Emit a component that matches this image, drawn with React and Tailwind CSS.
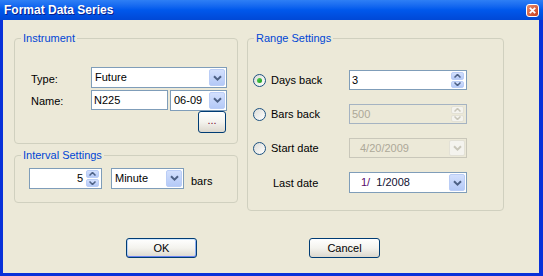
import React from "react";

const Chevron = ({ color = "#4D6185" }) => (
  <svg width="9" height="6" viewBox="0 0 9 6">
    <path d="M1 1.2 L4.5 4.6 L8 1.2" fill="none" stroke={color} strokeWidth="2" />
  </svg>
);

const ArrowUp = ({ color = "#4D6185" }) => (
  <svg width="7" height="4" viewBox="0 0 7 4">
    <path d="M0.5 3.5 L3.5 0.5 L6.5 3.5" fill="none" stroke={color} strokeWidth="1.5" />
  </svg>
);
const ArrowDown = ({ color = "#4D6185" }) => (
  <svg width="7" height="4" viewBox="0 0 7 4">
    <path d="M0.5 0.5 L3.5 3.5 L6.5 0.5" fill="none" stroke={color} strokeWidth="1.5" />
  </svg>
);

function Combo({ w, h = "h-[21px]", children, disabled }) {
  return (
    <div
      className={`${w} ${h} flex border ${
        disabled ? "border-[#C9C7BA] bg-[#ECE9D8]" : "border-[#7F9DB9] bg-white"
      } p-[1px]`}
    >
      <div className="flex-1 flex items-center pl-[2px] whitespace-nowrap overflow-hidden">{children}</div>
      {disabled ? (
        <div className="w-[16px] h-full rounded-[2px] bg-[#F4F3EE] border border-[#E3E1D6] flex items-center justify-center">
          <Chevron color="#C9C7BA" />
        </div>
      ) : (
        <div className="w-[16px] h-full rounded-[2px] bg-gradient-to-b from-[#D3E0FD] to-[#B4C9F7] border border-[#BACDF6] flex items-center justify-center">
          <Chevron />
        </div>
      )}
    </div>
  );
}

function Spin({ w, h = "h-[20px]", children, disabled, right }) {
  return (
    <div
      className={`${w} ${h} flex border ${
        disabled ? "border-[#A5B3C2] bg-[#ECE9D8] text-[#ACA899]" : "border-[#7F9DB9] bg-white"
      } py-[1px] pr-[2px]`}
    >
      <div className={`flex-1 flex items-center ${right ? "justify-end pr-[3px]" : "pl-[2px]"}`}>{children}</div>
      {disabled ? (
        <div className="w-[13px] h-full flex flex-col gap-[1px]">
          <div className="flex-1 rounded-[2px] bg-[#F4F3EE] border border-[#E3E1D6] flex items-center justify-center">
            <ArrowUp color="#C9C7BA" />
          </div>
          <div className="flex-1 rounded-[2px] bg-[#F4F3EE] border border-[#E3E1D6] flex items-center justify-center">
            <ArrowDown color="#C9C7BA" />
          </div>
        </div>
      ) : (
        <div className="w-[13px] h-full flex flex-col gap-[1px]">
          <div className="flex-1 rounded-[2px] bg-gradient-to-b from-[#D3E0FD] to-[#B4C9F7] border border-[#BACDF6] flex items-center justify-center">
            <ArrowUp />
          </div>
          <div className="flex-1 rounded-[2px] bg-gradient-to-b from-[#D3E0FD] to-[#B4C9F7] border border-[#BACDF6] flex items-center justify-center">
            <ArrowDown />
          </div>
        </div>
      )}
    </div>
  );
}

function Radio({ checked }) {
  return (
    <div className="w-[13px] h-[13px] rounded-full border border-[#1C5180] bg-gradient-to-br from-[#DCDCD7] to-white flex items-center justify-center">
      {checked && (
        <div className="w-[5px] h-[5px] rounded-full bg-gradient-to-br from-[#55D155] to-[#139A13]" />
      )}
    </div>
  );
}

function XPButton({ children, def, className }) {
  return (
    <button
      className={`${className} rounded-[3px] border border-[#003C74] bg-gradient-to-b from-white via-[#F4F3EE] to-[#DCD8CE] flex items-center justify-center text-[11px] leading-none text-black ${
        def
          ? "shadow-[inset_0_1px_0_#CEE7FF,inset_0_-1px_0_#6982EE,inset_1px_0_0_#B8D2F8,inset_-1px_0_0_#8DAEF3]"
          : ""
      }`}
    >
      {children}
    </button>
  );
}

function Group({ title, className, children }) {
  return (
    <fieldset className={`${className} border border-[#D0D0BF] rounded-[4px]`}>
      <legend className="ml-[6px] px-[2px] leading-[13px] text-[#0046D5]">{title}</legend>
      {children}
    </fieldset>
  );
}

export default function App() {
  return (
    <div className="w-[543px] h-[276px] flex flex-col bg-[#0831D9] text-[11px] text-black font-['Liberation_Sans',Arial,sans-serif]">
      <div className="h-[20px] shrink-0 flex items-center justify-between pl-[4px] pr-[4px] bg-gradient-to-b from-[#2E7FF5] via-[#0058EC] to-[#0048D6]">
        <span className="text-white font-bold text-[12px] leading-none [text-shadow:1px_1px_0_#0A1E8A]">
          Format Data Series
        </span>
        <div className="w-[13px] h-[13px] rounded-[3px] border border-white bg-gradient-to-br from-[#E98B6C] to-[#C63A17] flex items-center justify-center">
          <svg width="7" height="7" viewBox="0 0 7 7">
            <path d="M0.8 0.8 L6.2 6.2 M6.2 0.8 L0.8 6.2" stroke="white" strokeWidth="1.8" />
          </svg>
        </div>
      </div>
      <div className="flex-1 ml-[3px] mr-[4px] mb-[3px] bg-[#ECE9D8] flex flex-col">
        <div className="flex gap-[9px] pl-[11px] pt-[12px]">
          <div className="w-[224px] flex flex-col gap-[5px]">
            <Group title="Instrument" className="h-[112px]">
              <div className="mt-[22px] pl-[16px] flex flex-col">
                <div className="flex items-center h-[21px]">
                  <span className="w-[60px] pt-[3px]">Type:</span>
                  <Combo w="w-[136px]">Future</Combo>
                </div>
                <div className="flex items-center h-[20px] mt-[2px]">
                  <span className="w-[60px] pt-[3px]">Name:</span>
                  <div className="w-[77px] h-[20px] border border-[#7F9DB9] bg-white pl-[2px] flex items-center">N225</div>
                  <div className="ml-[2px]">
                    <Combo w="w-[57px]" h="h-[21px]">06-09</Combo>
                  </div>
                </div>
                <div className="flex justify-end pr-[11px] mt-[1px]">
                  <XPButton className="w-[28px] h-[22px]">
                    <span className="text-[#7A1030] -mt-[3px]">...</span>
                  </XPButton>
                </div>
              </div>
            </Group>
            <Group title="Interval Settings" className="h-[54px]">
              <div className="mt-[5px] pl-[14px] flex items-center">
                <Spin w="w-[73px]" h="h-[21px]" right>5</Spin>
                <div className="ml-[9px]">
                  <Combo w="w-[73px]" h="h-[21px]">Minute</Combo>
                </div>
                <span className="ml-[7px] pt-[6px]">bars</span>
              </div>
            </Group>
          </div>
          <Group title="Range Settings" className="w-[257px] h-[179px]">
            <div className="mt-[25px] pl-[5px] flex flex-col gap-[14px]">
              <div className="flex items-center h-[20px]">
                <div className="w-[96px] flex items-center gap-[5px] pt-[1px]">
                  <Radio checked />
                  <span>Days back</span>
                </div>
                <Spin w="w-[118px]">3</Spin>
              </div>
              <div className="flex items-center h-[20px]">
                <div className="w-[96px] flex items-center gap-[5px] pt-[1px]">
                  <Radio />
                  <span>Bars back</span>
                </div>
                <Spin w="w-[118px]" disabled>500</Spin>
              </div>
              <div className="flex items-center h-[20px]">
                <div className="w-[96px] flex items-center gap-[5px] pt-[1px]">
                  <Radio />
                  <span>Start date</span>
                </div>
                <Combo w="w-[118px]" h="h-[20px]" disabled>
                  <span className="pl-[7px] text-[#ACA899]">4/20/2009</span>
                </Combo>
              </div>
              <div className="flex items-center h-[21px]">
                <div className="w-[96px] pl-[20px] pt-[2px]">Last date</div>
                <Combo w="w-[118px]" h="h-[21px]">
                  <span className="pl-[8px]">
                    <span className="text-[#5A0A6A]">1/</span>
                    <span className="text-[#101030]">{"\u00A0\u00A01/2008"}</span>
                  </span>
                </Combo>
              </div>
            </div>
          </Group>
        </div>
        <div className="flex pl-[123px] mt-[27px] gap-[112px]">
          <XPButton def className="w-[71px] h-[20px]">OK</XPButton>
          <XPButton className="w-[71px] h-[20px]">Cancel</XPButton>
        </div>
      </div>
    </div>
  );
}
